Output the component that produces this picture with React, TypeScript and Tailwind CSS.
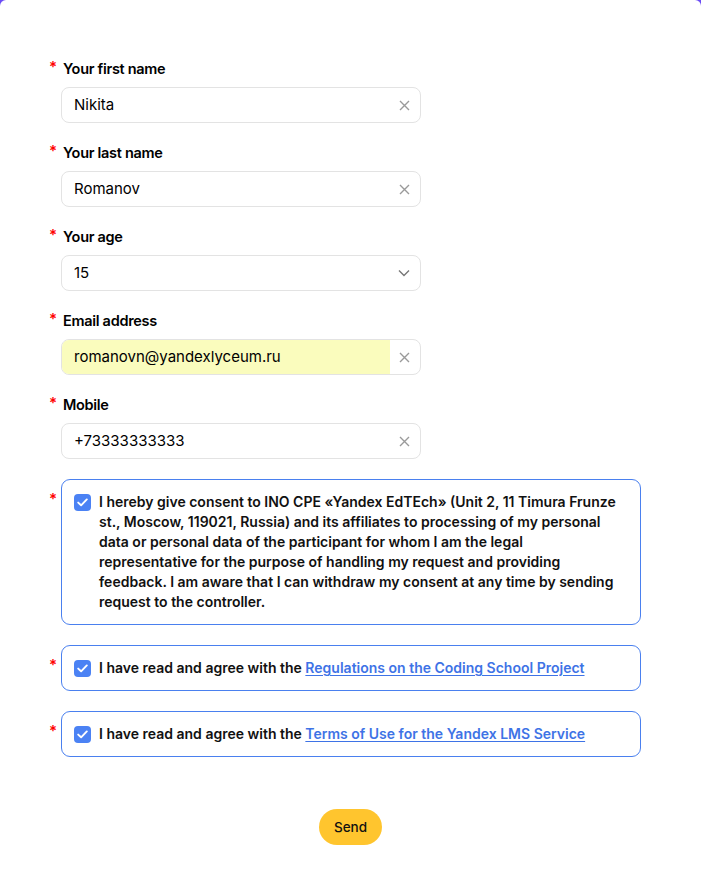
import * as React from "react"

const font = { fontFamily: "Inter, 'Noto Sans', sans-serif" }

function Label({ children }: { children: React.ReactNode }) {
  return (
    <div className="relative flex h-[20px] items-center pl-[63px]">
      <span className="absolute left-[49px] top-[-3px] text-[15px] font-semibold text-[#f00]">*</span>
      <span className="text-[14.5px] font-semibold tracking-[-0.3px] text-[#000]">{children}</span>
    </div>
  )
}

function ClearIcon() {
  return (
    <svg width="11" height="11" viewBox="0 0 11 11" className="shrink-0">
      <path d="M1 1L10 10M10 1L1 10" stroke="#9a9a9a" strokeWidth="1.4" />
    </svg>
  )
}

function Field({ label, value, kind = "text" }: { label: string; value: string; kind?: "text" | "select" | "autofill" }) {
  return (
    <div className="flex flex-col gap-[8px]">
      <Label>{label}</Label>
      <div className="ml-[61px] flex h-[36px] w-[360px] overflow-hidden rounded-[8px] border border-[#e3e3e3] bg-white">
        <div
          className={
            kind === "autofill"
              ? "flex flex-1 items-center bg-[#fafcbd] pl-[12px] text-[15px] text-[#000]"
              : "flex flex-1 items-center pl-[12px] text-[15px] text-[#000]"
          }
        >
          {value}
        </div>
        <div className="flex w-[30px] items-center justify-center pr-[2px]">
          {kind === "select" ? (
            <svg width="12" height="8" viewBox="0 0 12 8" className="shrink-0">
              <path d="M1 1.5L6 6.5L11 1.5" stroke="#777" strokeWidth="1.4" fill="none" />
            </svg>
          ) : (
            <ClearIcon />
          )}
        </div>
      </div>
    </div>
  )
}

function Check() {
  return (
    <span className="flex h-[17px] w-[17px] shrink-0 items-center justify-center rounded-[4px] bg-[#4b82f4]">
      <svg width="11" height="9" viewBox="0 0 11 9">
        <path d="M1.2 4.6L4.1 7.3L9.8 1.4" stroke="white" strokeWidth="1.9" fill="none" strokeLinecap="round" strokeLinejoin="round" />
      </svg>
    </span>
  )
}

function ConsentBox({ children, tall }: { children: React.ReactNode; tall?: boolean }) {
  return (
    <div className="relative ml-[61px] w-[580px]">
      <span className="absolute left-[-12px] top-[9px] text-[15px] font-semibold text-[#f00]">*</span>
      <div
        className={
          tall
            ? "flex gap-[8px] rounded-[9px] border border-[#4a80ef] pl-[12px] pr-[16px] pt-[12px] pb-[12px]"
            : "flex h-[46px] items-center gap-[8px] rounded-[9px] border border-[#4a80ef] px-[12px]"
        }
      >
        <div className={tall ? "pt-[2px]" : ""}>
          <Check />
        </div>
        <div className="text-[14px] font-semibold leading-[20px] text-[#111]">{children}</div>
      </div>
    </div>
  )
}

export default function App() {
  return (
    <div className="min-h-[889px] bg-[#6b4cf5]" style={font}>
      <div className="min-h-[889px] rounded-t-[6px] bg-white pt-[59px]">
        <div className="flex flex-col gap-[20px]">
          <Field label="Your first name" value="Nikita" />
          <Field label="Your last name" value="Romanov" />
          <Field label="Your age" value="15" kind="select" />
          <Field label="Email address" value="romanovn@yandexlyceum.ru" kind="autofill" />
          <Field label="Mobile" value="+73333333333" />
        </div>
        <div className="mt-[20px] flex flex-col gap-[20px]">
          <ConsentBox tall>
            I hereby give consent to INO CPE «Yandex EdTEch» (Unit 2, 11 Timura Frunze st., Moscow, 119021,
            Russia) and its affiliates to processing of my personal data or personal data of the participant for
            whom I am the legal representative for the purpose of handling my request and providing feedback. I am
            aware that I can withdraw my consent at any time by sending request to the controller.
          </ConsentBox>
          <ConsentBox>
            I have read and agree with the{" "}
            <a href="#" className="text-[#3e73e6] underline underline-offset-2">
              Regulations on the Coding School Project
            </a>
          </ConsentBox>
          <ConsentBox>
            I have read and agree with the{" "}
            <a href="#" className="text-[#3e73e6] underline underline-offset-2">
              Terms of Use for the Yandex LMS Service
            </a>
          </ConsentBox>
        </div>
        <div className="mt-[52px] flex justify-center">
          <button className="h-[36px] rounded-full bg-[#ffc52e] px-[15px] text-[13.5px] font-medium text-[#111]">
            Send
          </button>
        </div>
      </div>
    </div>
  )
}
